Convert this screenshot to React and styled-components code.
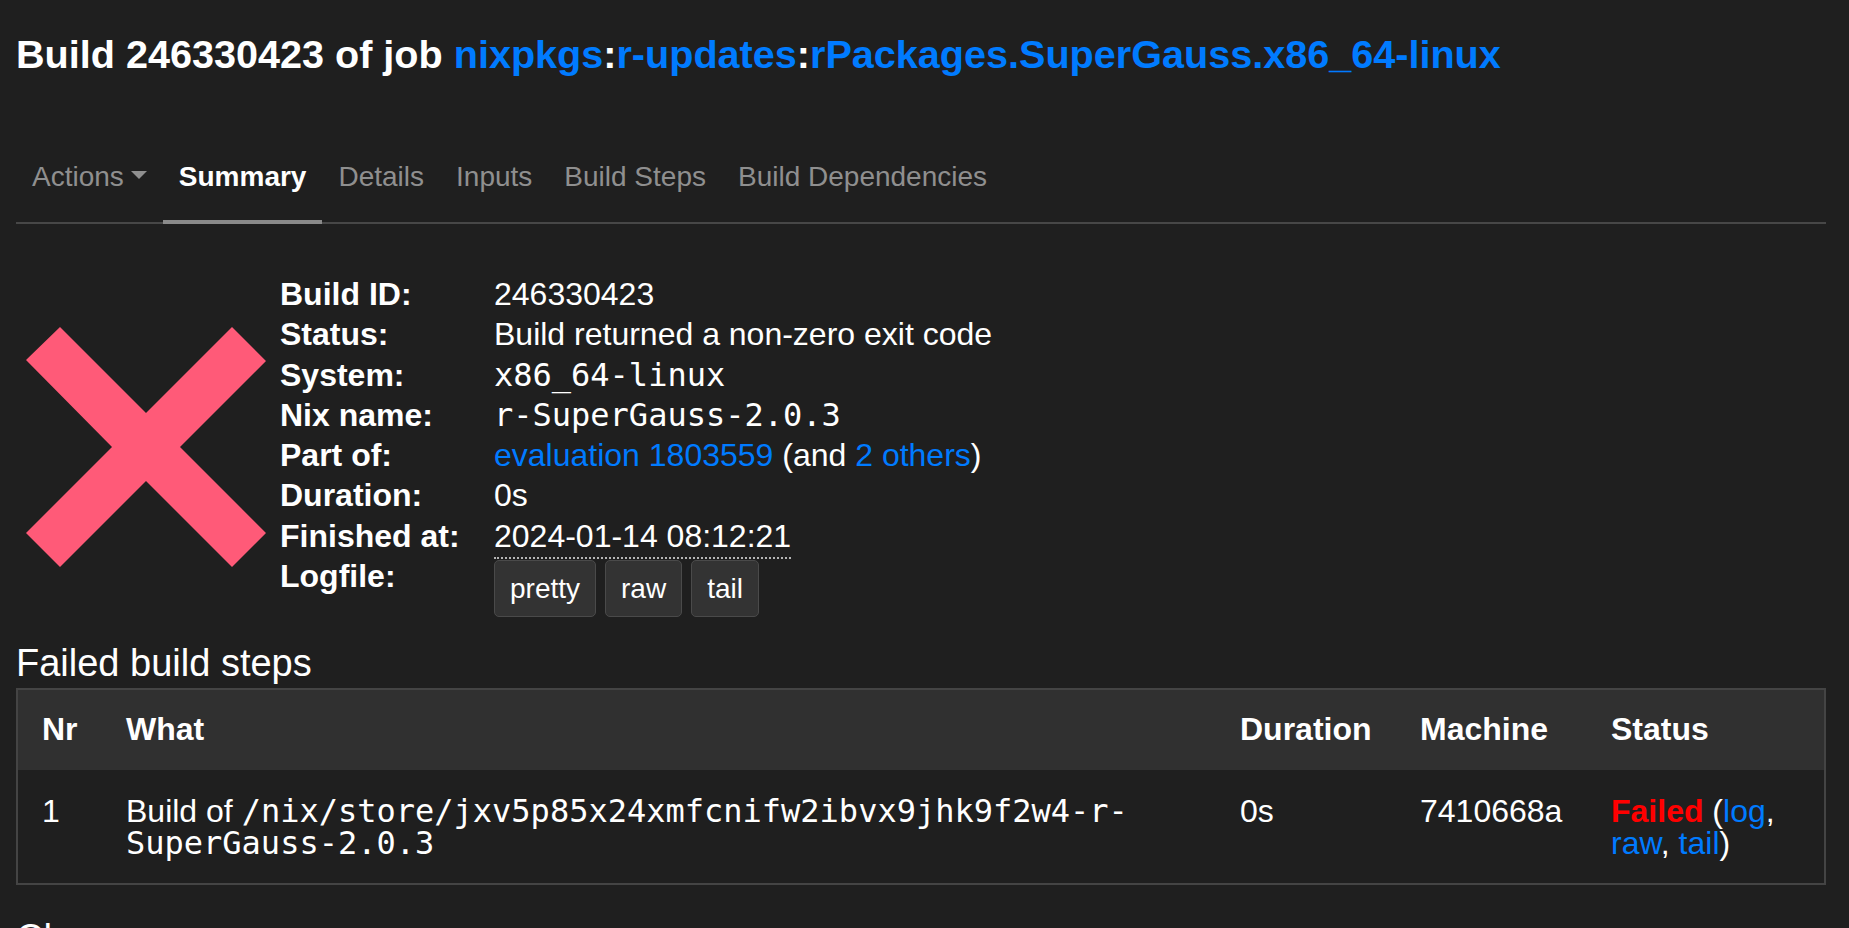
import React from 'react';
import styled, { createGlobalStyle } from 'styled-components';

const GlobalStyle = createGlobalStyle`
  html, body {
    margin: 0;
    padding: 0;
    background: #1f1f1f;
    color: #ffffff;
    font-family: "Liberation Sans", Arial, sans-serif;
    overflow: hidden;
  }
  * {
    box-sizing: border-box;
  }
`;

const Page = styled.div`
  padding: 0 23px 40px 16px;
`;

const Title = styled.h1`
  margin: 30px 0 0;
  font-size: 39.6px;
  line-height: 48px;
  font-weight: bold;
  white-space: nowrap;
`;

const Link = styled.a`
  color: #007bff;
  text-decoration: none;
  cursor: pointer;
`;

const Tabs = styled.ul`
  display: flex;
  list-style: none;
  margin: 56px 0 0;
  padding: 0;
  border-bottom: 2px solid #474747;
`;

const Tab = styled.li`
  padding: 22px 16px;
  font-size: 28px;
  line-height: 42px;
  color: ${p => (p.$active ? '#ffffff' : '#8f8f8f')};
  font-weight: ${p => (p.$active ? 'bold' : 'normal')};
  border-bottom: ${p => (p.$active ? '4px solid #8a8a8a' : 'none')};
  margin-bottom: ${p => (p.$active ? '-2px' : '0')};
  cursor: pointer;
`;

const Caret = styled.span`
  display: inline-block;
  margin-left: 7px;
  vertical-align: 7px;
  border-top: 8px solid #8f8f8f;
  border-left: 8px solid transparent;
  border-right: 8px solid transparent;
`;

const Summary = styled.div`
  display: flex;
  align-items: center;
  margin-top: 50px;
`;

const StatusIcon = styled.svg`
  flex: none;
  width: 256px;
  height: 256px;
  margin-left: 2px;
`;

const InfoTable = styled.table`
  margin-left: 6px;
  border-collapse: collapse;
  border-spacing: 0;
`;

const InfoLabel = styled.th`
  width: 214px;
  padding: 0;
  text-align: left;
  vertical-align: top;
  font-size: 32px;
  line-height: 40.3px;
  font-weight: bold;
`;

const InfoValue = styled.td`
  padding: 0;
  vertical-align: top;
  font-size: 32px;
  line-height: 40.3px;
  white-space: nowrap;
`;

const Mono = styled.span`
  font-family: "DejaVu Sans Mono", "Liberation Mono", monospace;
  font-size: 32px;
`;

const Timestamp = styled.span`
  padding-bottom: 3px;
  border-bottom: 2px dotted #b5b5b5;
`;

const ButtonRow = styled.div`
  display: flex;
  gap: 9px;
  padding: 4px 0 2px;
`;

const LogButton = styled.button`
  font-family: "Liberation Sans", Arial, sans-serif;
  font-size: 28px;
  line-height: 41px;
  padding: 7px 15px;
  color: #ffffff;
  background: #333333;
  border: 1px solid #4a4a4a;
  border-radius: 5px;
  cursor: pointer;
`;

const SectionTitle = styled.h2`
  margin: ${p => p.$top}px 0 2px;
  font-size: 38px;
  line-height: 46px;
  font-weight: normal;
`;

const StepsTable = styled.table`
  width: 100%;
  table-layout: fixed;
  border-collapse: separate;
  border-spacing: 0;
  border: 2px solid #444444;
`;

const Col = styled.col`
  width: ${p => p.$w};
`;

const HeadCell = styled.th`
  padding: 23px 24px 25px;
  text-align: left;
  font-size: 32px;
  line-height: 32px;
  font-weight: bold;
  background: #303030;
`;

const Cell = styled.td`
  padding: 25px 24px 24px;
  vertical-align: top;
  font-size: 32px;
  line-height: 32px;
`;

const Failed = styled.span`
  color: #ff0000;
  font-weight: bold;
`;

const XMark = () => (
  <StatusIcon viewBox="-8 -8 256 256">
    <polygon
      fill="#ff5a78"
      points="0,33 34,0 120,86 206,0 240,34 154,120 240,206 206,240 120,154 34,240 0,206 86,120"
    />
  </StatusIcon>
);

const info = [
  ['Build ID:', '246330423'],
  ['Status:', 'Build returned a non-zero exit code'],
  ['System:', <Mono>x86_64-linux</Mono>],
  ['Nix name:', <Mono>r-SuperGauss-2.0.3</Mono>],
  [
    'Part of:',
    <>
      <Link>evaluation 1803559</Link> (and <Link>2 others</Link>)
    </>,
  ],
  ['Duration:', '0s'],
  ['Finished at:', <Timestamp>2024-01-14 08:12:21</Timestamp>],
  [
    'Logfile:',
    <ButtonRow>
      <LogButton>pretty</LogButton>
      <LogButton>raw</LogButton>
      <LogButton>tail</LogButton>
    </ButtonRow>,
  ],
];

const App = () => {
  return (
    <Page>
      <GlobalStyle />
      <Title>
        Build 246330423 of job <Link>nixpkgs</Link>:<Link>r-updates</Link>:
        <Link>rPackages.SuperGauss.x86_64-linux</Link>
      </Title>

      <Tabs>
        <Tab>
          Actions
          <Caret />
        </Tab>
        <Tab $active>Summary</Tab>
        <Tab>Details</Tab>
        <Tab>Inputs</Tab>
        <Tab>Build Steps</Tab>
        <Tab>Build Dependencies</Tab>
      </Tabs>

      <Summary>
        <XMark />
        <InfoTable>
          <tbody>
            {info.map(([label, value]) => (
              <tr key={label}>
                <InfoLabel>{label}</InfoLabel>
                <InfoValue>{value}</InfoValue>
              </tr>
            ))}
          </tbody>
        </InfoTable>
      </Summary>

      <SectionTitle $top={21}>Failed build steps</SectionTitle>
      <StepsTable>
        <colgroup>
          <Col $w="84px" />
          <Col $w="auto" />
          <Col $w="180px" />
          <Col $w="191px" />
          <Col $w="237px" />
        </colgroup>
        <thead>
          <tr>
            <HeadCell>Nr</HeadCell>
            <HeadCell>What</HeadCell>
            <HeadCell>Duration</HeadCell>
            <HeadCell>Machine</HeadCell>
            <HeadCell>Status</HeadCell>
          </tr>
        </thead>
        <tbody>
          <tr>
            <Cell>1</Cell>
            <Cell>
              Build of <Mono>/nix/store/jxv5p85x24xmfcnifw2ibvx9jhk9f2w4-r-SuperGauss-2.0.3</Mono>
            </Cell>
            <Cell>0s</Cell>
            <Cell>7410668a</Cell>
            <Cell>
              <Failed>Failed</Failed> (<Link>log</Link>, <Link>raw</Link>, <Link>tail</Link>)
            </Cell>
          </tr>
        </tbody>
      </StepsTable>

      <SectionTitle $top={30}>Changes</SectionTitle>
    </Page>
  );
};

export default App;
